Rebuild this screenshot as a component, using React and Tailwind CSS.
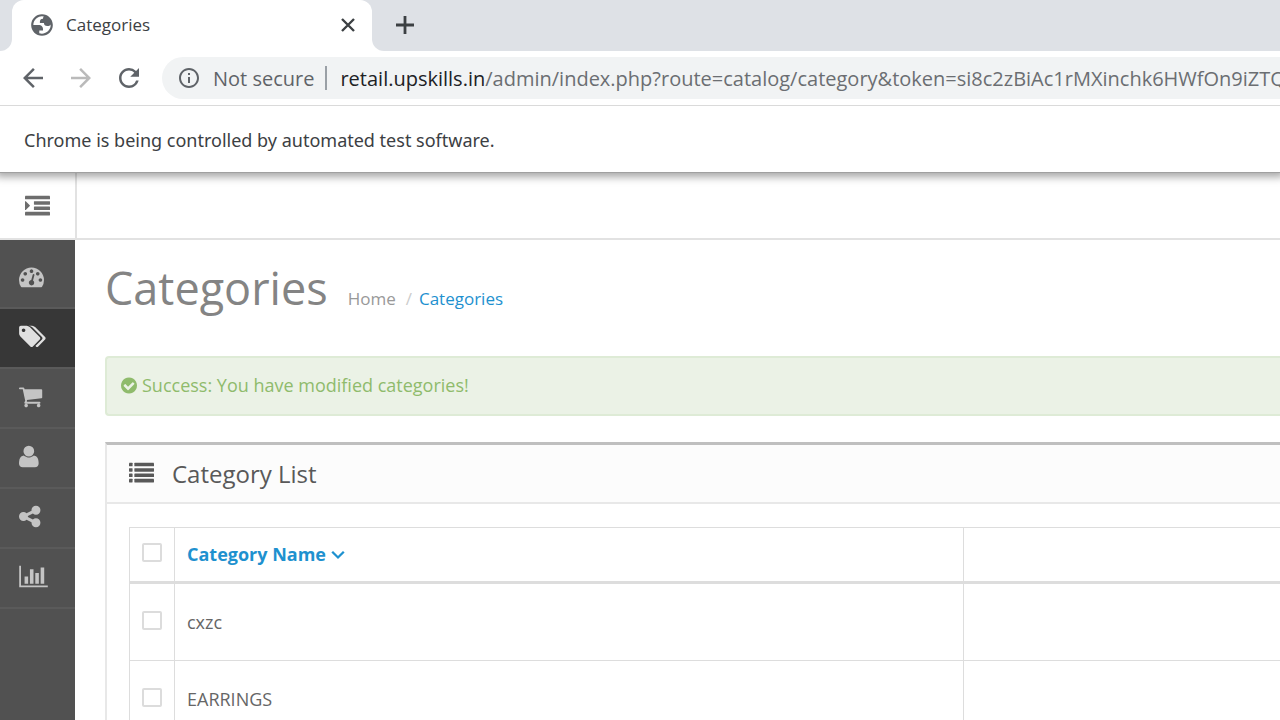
import { MdArrowBack, MdArrowForward, MdRefresh, MdInfoOutline } from "react-icons/md";

const icons = {
  dashboard: {
    width: 1792,
    path: "M384 1152q0-53-37.5-90.5t-90.5-37.5-90.5 37.5-37.5 90.5 37.5 90.5 90.5 37.5 90.5-37.5 37.5-90.5zm192-448q0-53-37.5-90.5t-90.5-37.5-90.5 37.5-37.5 90.5 37.5 90.5 90.5 37.5 90.5-37.5 37.5-90.5zm428 481l101-382q6-26-7.5-48.5t-38.5-29.5-48 6.5-30 39.5l-101 382q-60 5-107 43.5t-63 98.5q-20 77 20 146t117 89 146-20 89-117q16-60-6-117t-72-91zm660-33q0-53-37.5-90.5t-90.5-37.5-90.5 37.5-37.5 90.5 37.5 90.5 90.5 37.5 90.5-37.5 37.5-90.5zm-640-640q0-53-37.5-90.5t-90.5-37.5-90.5 37.5-37.5 90.5 37.5 90.5 90.5 37.5 90.5-37.5 37.5-90.5zm448 192q0-53-37.5-90.5t-90.5-37.5-90.5 37.5-37.5 90.5 37.5 90.5 90.5 37.5 90.5-37.5 37.5-90.5zm320 448q0 261-141 483-19 29-54 29h-1402q-35 0-54-29-141-221-141-483 0-182 71-348t191-286 286-191 348-71 348 71 286 191 191 286 71 348z",
  },
  tags: {
    width: 1920,
    path: "M448 448q0-53-37.5-90.5t-90.5-37.5-90.5 37.5-37.5 90.5 37.5 90.5 90.5 37.5 90.5-37.5 37.5-90.5zm1067 576q0 53-37 90l-491 492q-39 37-91 37-53 0-90-37l-715-716q-38-37-64.5-101t-26.5-117v-416q0-52 38-90t90-38h416q53 0 117 26.5t102 64.5l715 714q37 39 37 91zm384 0q0 53-37 90l-491 492q-39 37-91 37-36 0-59-14t-53-45l470-470q37-37 37-90 0-52-37-91l-715-714q-38-38-102-64.5t-117-26.5h224q53 0 117 26.5t102 64.5l715 714q37 39 37 91z",
  },
  cart: {
    width: 1792,
    path: "M640 1536q0 52-38 90t-90 38-90-38-38-90 38-90 90-38 90 38 38 90zm896 0q0 52-38 90t-90 38-90-38-38-90 38-90 90-38 90 38 38 90zm128-1088v512q0 24-16.5 42.5t-40.5 21.5l-1044 122q13 60 13 70 0 16-24 64h920q26 0 45 19t19 45-19 45-45 19h-1024q-26 0-45-19t-19-45q0-11 8-31.5t16-36 21.5-40 15.5-29.5l-177-823h-204q-26 0-45-19t-19-45 19-45 45-19h256q16 0 28.5 6.5t19.5 15.5 13 24.5 8 26 5.5 29.5 4.5 26h1201q26 0 45 19t19 45z",
  },
  user: {
    width: 1792,
    flipped: true,
    path: "M1408 131q0 -120 -73 -189.5t-194 -69.5h-874q-121 0 -194 69.5t-73 189.5q0 53 3.5 103.5t14 109t26.5 108.5t43 97.5t62 81t85.5 53.5t111.5 20q9 0 42 -21.5t74.5 -48t108 -48t133.5 -21.5t133.5 21.5t108 48t74.5 48t42 21.5q61 0 111.5 -20t85.5 -53.5t62 -81t43 -97.5t26.5 -108.5t14 -109t3.5 -103.5zM1088 1024q0 -159 -112.5 -271.5t-271.5 -112.5t-271.5 112.5t-112.5 271.5t112.5 271.5t271.5 112.5t271.5 -112.5t112.5 -271.5z",
  },
  share: {
    width: 1792,
    path: "M1216 1024q133 0 226.5 93.5t93.5 226.5-93.5 226.5-226.5 93.5-226.5-93.5-93.5-226.5q0-12 2-34l-360-180q-92 86-218 86-133 0-226.5-93.5t-93.5-226.5 93.5-226.5 226.5-93.5q126 0 218 86l360-180q-2-22-2-34 0-133 93.5-226.5t226.5-93.5 226.5 93.5 93.5 226.5-93.5 226.5-226.5 93.5q-126 0-218-86l-360 180q2 22 2 34t-2 34l360 180q92-86 218-86z",
  },
  chart: {
    width: 2048,
    path: "M640 896v512h-256v-512h256zm384-512v1024h-256v-1024h256zm1024 1152v128h-2048v-1536h128v1408h1920zm-640-896v768h-256v-768h256zm384-384v1152h-256v-1152h256z",
  },
  check: {
    width: 1536,
    path: "M1284 734q0-28-18-46l-91-90q-19-19-45-19t-45 19l-408 407-226-226q-19-19-45-19t-45 19l-91 90q-18 18-18 46 0 27 18 45l362 362q19 19 45 19 27 0 46-19l543-543q18-18 18-45zm252 162q0 209-103 385.5t-279.5 279.5-385.5 103-385.5-103-279.5-279.5-103-385.5 103-385.5 279.5-279.5 385.5-103 385.5 103 279.5 279.5 103 385.5z",
  },
};

function Glyph({ name, className }) {
  const icon = icons[name];
  return (
    <svg viewBox={`0 0 ${icon.width} 1792`} fill="currentColor" className={className} aria-hidden="true">
      <path d={icon.path} transform={icon.flipped ? "translate(0 1536) scale(1 -1)" : undefined} />
    </svg>
  );
}

function IndentIcon() {
  return (
    <svg viewBox="0 0 1792 1792" fill="currentColor" className="size-[25px]" aria-hidden="true">
      <path d="M352 832q0 14-9 23l-288 288q-9 9-23 9-13 0-22.5-9.5t-9.5-22.5v-576q0-13 9.5-22.5t22.5-9.5q14 0 23 9l288 288q9 9 9 23z" />
      <rect x="0" y="128" width="1792" height="256" rx="32" />
      <rect x="640" y="512" width="1152" height="256" rx="32" />
      <rect x="640" y="896" width="1152" height="256" rx="32" />
      <rect x="0" y="1280" width="1792" height="256" rx="32" />
    </svg>
  );
}

function ListIcon() {
  return (
    <svg viewBox="0 0 1792 1792" fill="currentColor" className="size-[25px]" aria-hidden="true">
      {[128, 512, 896, 1280].map((y) => (
        <g key={y}>
          <rect x="0" y={y} width="256" height="256" rx="32" />
          <rect x="384" y={y} width="1408" height="256" rx="32" />
        </g>
      ))}
    </svg>
  );
}

function GlobeIcon() {
  return (
    <svg viewBox="0 0 24 24" fill="currentColor" className="size-[26px] text-[#5f6368]" aria-hidden="true">
      <path
        fillRule="evenodd"
        d="M12 2C6.480 2 2 6.480 2 12s4.480 10 10 10 10-4.480 10-10S17.520 2 12 2zM4 12h4.400c3.407.022 4.922 1.730 4.543 5.127H9.488v2.470a8.004 8.004 0 0 0 10.498-8.083C19.327 12.504 18.332 13 17 13c-2.137 0-3.206-.916-3.206-2.750h-3.748c-.274-2.728.683-4.092 2.870-4.092 0-.975.327-1.597.811-1.970A8.004 8.004 0 0 0 4 12z"
      />
    </svg>
  );
}

const navItems = [
  { label: "Dashboard", icon: "dashboard", size: "h-[25px] w-[25px]" },
  { label: "Catalog", icon: "tags", size: "h-[25px] w-[27px]", active: true },
  { label: "Sales", icon: "cart", size: "h-[25px] w-[25px]" },
  { label: "Customers", icon: "user", size: "h-[25px] w-[25px]" },
  { label: "Marketing", icon: "share", size: "h-[25px] w-[25px]" },
  { label: "Reports", icon: "chart", size: "h-[25px] w-[29px]" },
];

const categories = ["cxzc", "EARRINGS"];

function Checkbox({ label }) {
  return (
    <input
      type="checkbox"
      aria-label={label}
      className="mb-1 block h-[19px] w-5 appearance-none rounded-[2px] border-2 border-[#dcdcdc] bg-white checked:bg-[#1e91cf]"
    />
  );
}

function BrowserChrome() {
  return (
    <div className="relative z-10 border-b border-[#a0a0a0] bg-white font-['Open_Sans',sans-serif] shadow-[0_0_8px_4px_rgba(0,0,0,0.35)]">
      <div className="flex h-[51px] bg-white">
        <div className="w-3 shrink-0 rounded-br-[12px] bg-[#dee1e6]" />
        <div className="flex flex-1 bg-[linear-gradient(#dee1e6_50%,#fff_50%)]">
          <div className="flex w-[360px] shrink-0 items-center rounded-t-[12px] bg-white pr-4 pb-0.5 pl-[17px]">
            <GlobeIcon />
            <span className="ml-[11px] flex-1 text-[17px] text-[#3c4043]">Categories</span>
            <button type="button" aria-label="Close tab" className="text-[#3c4043]">
              <svg viewBox="0 0 16 16" className="size-4" fill="none" stroke="currentColor" strokeWidth="2.4">
                <path d="M2 2l12 12M14 2L2 14" />
              </svg>
            </button>
          </div>
          <div className="flex flex-1 items-center rounded-bl-[12px] bg-[#dee1e6] pb-0.5 pl-[23px]">
            <button type="button" aria-label="New tab" className="text-[#3c4043]">
              <svg viewBox="0 0 20 20" className="size-5" fill="none" stroke="currentColor" strokeWidth="2.8">
                <path d="M10 1v18M1 10h18" />
              </svg>
            </button>
          </div>
        </div>
      </div>

      <div className="flex h-[55px] items-center border-b border-[#dadada] pl-[18px]">
        <button type="button" aria-label="Back" className="text-[#5f6368]">
          <MdArrowBack className="size-[30px]" />
        </button>
        <button type="button" aria-label="Forward" className="ml-[18px] text-[#bababa]">
          <MdArrowForward className="size-[30px]" />
        </button>
        <button type="button" aria-label="Reload" className="ml-[18px] text-[#5f6368]">
          <MdRefresh className="size-[30px]" />
        </button>
        <div className="ml-[18px] flex h-[42px] min-w-0 flex-1 items-center rounded-l-full bg-[#f1f3f4] pl-[15px]">
          <MdInfoOutline className="size-6 shrink-0 text-[#5f6368]" />
          <span className="ml-3 shrink-0 pt-0.5 text-[20px] text-[#5f6368]">Not secure</span>
          <span className="ml-[11px] h-6 w-[2px] shrink-0 bg-[#9aa0a6]" />
          <span className="ml-[13px] overflow-hidden pt-0.5 text-[20px] whitespace-nowrap text-[#6b6e72]">
            <span className="text-[#202124]">retail.upskills.in</span>
            /admin/index.php?route=catalog/category&amp;token=si8c2zBiAc1rMXinchk6HWfOn9iZTQ
          </span>
        </div>
      </div>

      <p className="flex h-[66px] items-center px-6 pt-0.5 font-['Noto_Sans',sans-serif] text-[18px] text-[#3c4043]">
        Chrome is being controlled by automated test software.
      </p>
    </div>
  );
}

export default function App() {
  return (
    <div className="flex h-screen flex-col overflow-hidden bg-white font-['Open_Sans',sans-serif] text-[#666]">
      <BrowserChrome />

      <header className="flex h-[67px] shrink-0 border-b-2 border-[#e2e2e2]">
        <button
          type="button"
          aria-label="Toggle menu"
          className="flex w-[77px] items-center border-r-2 border-[#e2e2e2] pt-0.5 pl-[25px] text-[#6d6d6d]"
        >
          <IndentIcon />
        </button>
      </header>

      <div className="flex min-h-0 flex-1">
        <nav aria-label="Main" className="w-[75px] shrink-0 bg-[#515151] pt-[9px]">
          <ul>
            {navItems.map((item) => (
              <li key={item.label} className="border-b-2 border-[#5a5a5a]">
                <a
                  href="#"
                  aria-label={item.label}
                  className={
                    item.active
                      ? "flex h-[58px] items-center bg-[#373737] pb-1 pl-[19px] text-[#e0e0e0]"
                      : "flex h-[58px] items-center pb-1 pl-[19px] text-[#c4c4c4]"
                  }
                >
                  <Glyph name={item.icon} className={item.size} />
                </a>
              </li>
            ))}
          </ul>
        </nav>

        <main className="min-w-0 flex-1 pt-[18px] pl-[30px]">
          <div className="flex items-baseline">
            <h1 className="text-[45px] leading-[60px] text-[#848484]">Categories</h1>
            <nav aria-label="Breadcrumb" className="ml-5">
              <ol className="flex items-baseline text-[17px]">
                <li>
                  <a href="#" className="text-[#999]">Home</a>
                </li>
                <li className="flex">
                  <span aria-hidden="true" className="mr-[7px] ml-[10px] text-[#ccc]">/</span>
                  <a href="#" className="text-[#1e91cf]">Categories</a>
                </li>
              </ol>
            </nav>
          </div>

          <div
            role="status"
            className="mt-[38px] flex h-[60px] items-center rounded-l-[4px] border-2 border-r-0 border-[#deebd6] bg-[#ebf2e6] pb-0.5 pl-[14px] text-[18px] text-[#8fbb6c]"
          >
            <Glyph name="check" className="mr-[5px] h-[19px] w-4" />
            Success: You have modified categories!
          </div>

          <section className="mt-[26px] border-t-[3px] border-l-2 border-t-[#bfbfbf] border-l-[#e8e8e8]">
            <div className="flex h-[59px] items-center border-b-2 border-[#e8e8e8] bg-[#fcfcfc] pl-[22px] text-[#595959]">
              <ListIcon />
              <h2 className="ml-[18px] text-[24px]">Category List</h2>
            </div>
            <div className="pt-[23px] pl-[22px]">
              <table className="w-full border-collapse text-left text-[18px]">
                <thead>
                  <tr className="h-[55px] border-t border-b-[3px] border-[#ddd]">
                    <th className="w-[45px] border-x border-[#ddd] px-3 align-middle">
                      <Checkbox label="Select all categories" />
                    </th>
                    <th className="w-[789px] border-r border-[#ddd] px-3 font-bold">
                      <a href="#" className="inline-flex items-center text-[#1e91cf]">
                        Category Name
                        <svg viewBox="0 0 14 10" className="ml-[5px] h-[10px] w-[14px]" fill="none" stroke="currentColor" strokeWidth="2.3" aria-hidden="true">
                          <path d="M1.200 1.800L7 7.500l5.800-5.700" />
                        </svg>
                      </a>
                    </th>
                    <td />
                  </tr>
                </thead>
                <tbody>
                  {categories.map((name) => (
                    <tr key={name} className="h-[78px] border-b border-[#ddd]">
                      <td className="border-x border-[#ddd] px-3 align-middle">
                        <Checkbox label={`Select ${name}`} />
                      </td>
                      <td className="border-r border-[#ddd] px-3">{name}</td>
                      <td />
                    </tr>
                  ))}
                </tbody>
              </table>
            </div>
          </section>
        </main>
      </div>
    </div>
  );
}
